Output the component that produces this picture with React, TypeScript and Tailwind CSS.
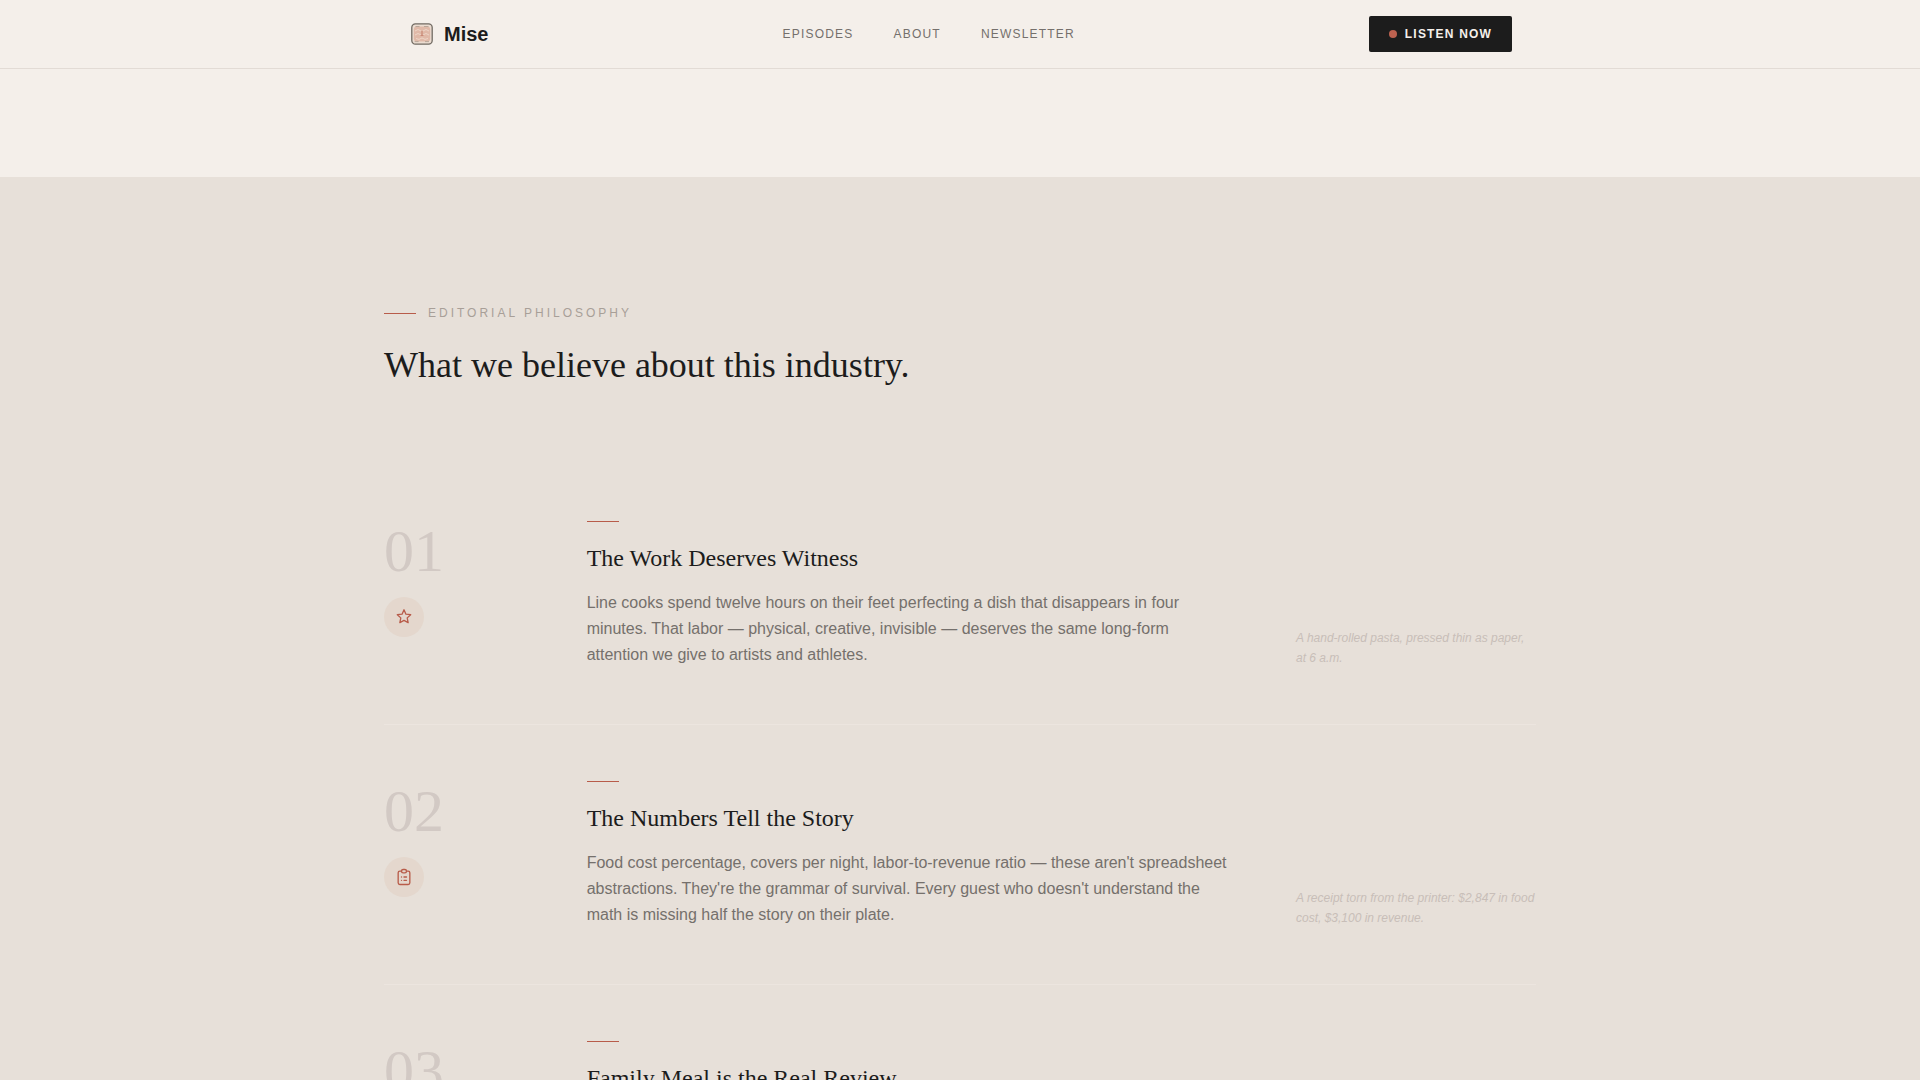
import type { ReactNode } from "react";

const StarIcon = () => (
  <svg width="16" height="16" viewBox="0 0.8 24 24" fill="none" stroke="#b85c4a" strokeWidth="2" strokeLinecap="round" strokeLinejoin="round">
    <polygon points="12 2 14.9 8.6 22 9.3 16.8 14.1 18.2 21.2 12 17.8 5.8 21.2 7.2 14.1 2 9.3 9.1 8.6 12 2" />
  </svg>
);

const ClipboardIcon = () => (
  <svg width="20" height="20" viewBox="0 0 24 24" fill="none" stroke="#b85c4a" strokeWidth="1.6" strokeLinecap="round" strokeLinejoin="round">
    <path d="M9 5H7a2 2 0 0 0-2 2v12a2 2 0 0 0 2 2h10a2 2 0 0 0 2-2V7a2 2 0 0 0-2-2h-2" />
    <rect x="9" y="3" width="6" height="4" rx="2" />
    <path d="M9 12h.01M9 16h.01M12 12h3M12 16h3" />
  </svg>
);

const Logo = () => (
  <svg width="22" height="22" viewBox="0 0 22 22" fill="none">
    <rect x="0.8" y="0.8" width="20.4" height="20.4" rx="3.6" fill="#ebdcd1" stroke="#716b63" strokeWidth="1.3" />
    <rect x="2.8" y="3.6" width="16.4" height="14.8" rx="3" fill="#e0b9a8" />
    <path d="M4.5 3.5h4M13 3.5h4.5M3.6 18.6h4M14 18.6h4" stroke="#b3a294" strokeWidth="0.9" />
    <path d="M4 8q3-3 6 0M12 8q3-3 6 0M4 12q3-3 6 0M12 12q3-3 6 0M5 15.5q3 2 6-.5q3 2.5 6 .5" stroke="#efd9cb" strokeWidth="0.9" />
    <path d="M11 8v5M9.5 12.5h3" stroke="#c98a77" strokeWidth="1.2" />
  </svg>
);

type Belief = { num: string; title: string; lines: string[]; note: string[]; icon: ReactNode };

const beliefs: Belief[] = [
  {
    num: "01",
    title: "The Work Deserves Witness",
    lines: [
      "Line cooks spend twelve hours on their feet perfecting a dish that disappears in four",
      "minutes. That labor — physical, creative, invisible — deserves the same long-form",
      "attention we give to artists and athletes.",
    ],
    note: ["A hand-rolled pasta, pressed thin as paper,", "at 6 a.m."],
    icon: <StarIcon />,
  },
  {
    num: "02",
    title: "The Numbers Tell the Story",
    lines: [
      "Food cost percentage, covers per night, labor-to-revenue ratio — these aren't spreadsheet",
      "abstractions. They're the grammar of survival. Every guest who doesn't understand the",
      "math is missing half the story on their plate.",
    ],
    note: ["A receipt torn from the printer: $2,847 in food", "cost, $3,100 in revenue."],
    icon: <ClipboardIcon />,
  },
  { num: "03", title: "Family Meal is the Real Review", lines: [], note: [], icon: null },
];

function BeliefRow({ num, title, lines, note, icon }: Belief) {
  return (
    <div className="grid h-[260px] grid-cols-12 gap-x-16 border-b border-[#ece5df] py-14">
      <div className="col-span-2">
        <div className="font-['Liberation_Serif',serif] text-6xl leading-none text-[#d2c9c4]">{num}</div>
        <div className="mt-4 flex size-10 items-center justify-center rounded-full bg-[#e4d7cd]">{icon}</div>
      </div>
      <div className="col-span-7">
        <div className="h-px w-8 bg-[#b85c4a]" />
        <h3 className="mt-5 font-['Liberation_Serif',serif] text-2xl leading-[33px] text-[#1c1c1c]">{title}</h3>
        <div className="mt-[15px] text-base leading-[26px] text-[#75706c]">
          {lines.map((l) => (
            <p key={l} className="whitespace-nowrap">{l}</p>
          ))}
        </div>
      </div>
      <div className="col-span-3 self-end text-xs leading-5 text-[#c8beb8] italic">
        {note.map((l) => (
          <p key={l} className="whitespace-nowrap">{l}</p>
        ))}
      </div>
    </div>
  );
}

export default function App() {
  return (
    <div className="h-[1080px] overflow-hidden bg-[#f4efea] font-['Liberation_Sans',sans-serif]">
      <header className="h-[69px] border-b border-[#e2dbd5]">
        <div className="mx-auto flex h-[68px] w-[1104px] items-center justify-between">
          <a className="flex items-center gap-[11px] pl-[3px]">
            <Logo />
            <span className="text-xl font-bold text-[#1c1c1c]">Mise</span>
          </a>
          <nav className="flex gap-10 text-xs tracking-[1.2px] text-[#75706c]">
            <a>EPISODES</a>
            <a>ABOUT</a>
            <a>NEWSLETTER</a>
          </nav>
          <button className="flex h-9 w-[143px] items-center justify-center gap-2 rounded-xs bg-[#1c1c1c] text-xs font-bold tracking-[1.2px] text-[#f4efea]">
            <span className="size-2 rounded-full bg-[#bd6250]" />
            LISTEN NOW
          </button>
        </div>
      </header>
      <section className="mt-[108px] h-[903px] bg-[#e7e0d9] pt-32">
        <div className="mx-auto w-[1152px]">
          <div className="flex h-4 items-center gap-3">
            <span className="h-px w-8 bg-[#b85c4a]" />
            <span className="text-xs tracking-[3px] text-[#a89f98]">EDITORIAL PHILOSOPHY</span>
          </div>
          <h2 className="mt-6 font-['Liberation_Serif',serif] text-4xl leading-10 text-[#1c1c1c]">
            What we believe about this industry.
          </h2>
          <div className="mt-20">
            {beliefs.map((b) => (
              <BeliefRow key={b.num} {...b} />
            ))}
          </div>
        </div>
      </section>
    </div>
  );
}
